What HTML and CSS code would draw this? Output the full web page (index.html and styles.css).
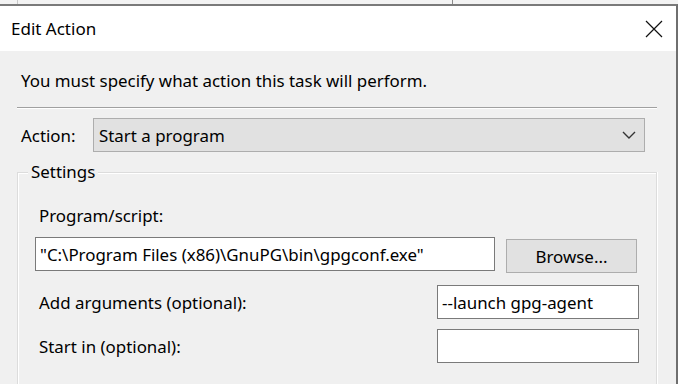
FILE: index.html
```html
<!DOCTYPE html>
<html>
<head>
<meta charset="utf-8">
<link rel="stylesheet" href="styles.css">
</head>
<body>
<div class="backdrop">
  <div class="bd-line bd-line-a"></div>
  <div class="bd-line bd-line-b"></div>
</div>
<div class="dialog">
  <div class="titlebar">
    <span class="title">Edit Action</span>
    <svg class="close" width="18" height="18" viewBox="0 0 18 18"><path d="M1 1 L17 17 M17 1 L1 17" stroke="#111" stroke-width="1.2" fill="none"/></svg>
  </div>
  <div class="content">
    <p class="intro">You must specify what action this task will perform.</p>
    <div class="separator"></div>
    <div class="action-row">
      <span class="action-label">Action:</span>
      <div class="combo">
        <span>Start a program</span>
        <svg class="chev" width="14" height="8" viewBox="0 0 14 8"><path d="M1 1 L7 7 L13 1" stroke="#333" stroke-width="1.4" fill="none"/></svg>
      </div>
    </div>
    <div class="group">
      <span class="legend">Settings</span>
      <div class="field-label">Program/script:</div>
      <div class="program-row">
        <div class="input wide">"C:\Program Files (x86)\GnuPG\bin\gpgconf.exe"</div>
        <div class="button">Browse...</div>
      </div>
      <div class="arg-row">
        <span class="field-label-inline">Add arguments (optional):</span>
        <div class="input small">--launch gpg-agent</div>
      </div>
      <div class="arg-row">
        <span class="field-label-inline">Start in (optional):</span>
        <div class="input small"></div>
      </div>
    </div>
  </div>
</div>
</body>
</html>
```
FILE: styles.css
```css
html, body {
  margin: 0;
  padding: 0;
  width: 678px;
  height: 384px;
  overflow: hidden;
  background: #f0f0f0;
  font-family: "Noto Sans", "Open Sans", sans-serif;
  font-size: 16.9px;
  color: #000;
}
.backdrop {
  height: 4px;
  position: relative;
  background: #f3f3f3;
}
.bd-line {
  position: absolute;
  top: 0;
  width: 1px;
  height: 4px;
}
.bd-line-a { left: 17px; background: #c8c8c8; }
.bd-line-b { left: 452px; background: #8a8a8a; }
.dialog {
  width: 676px;
  border-top: 2px solid #7a7a7a;
  border-right: 2px solid #6f6f6f;
  height: 378px;
  background: #f0f0f0;
  overflow: hidden;
}
.titlebar {
  height: 45px;
  background: #fff;
  display: flex;
  align-items: center;
  justify-content: space-between;
  padding: 0 13px 0 11px;
}
.title {
  font-size: 17px;
}
.close { display: block; }
.content {
  padding: 0 19px 0 17px;
}
.intro {
  margin: 0;
  padding: 20px 0 0 4px;
  height: 36px;
  line-height: 20px;
}
.separator {
  height: 1px;
  background: #a0a0a0;
  border-bottom: 1px solid #fff;
  margin: 0 0 9px 0;
}
.action-row {
  display: flex;
  align-items: center;
  padding-left: 4px;
}
.action-label {
  flex: 0 0 72px;
}
.combo {
  flex: 0 0 552px;
  border: 1px solid #adadad;
  background: #e1e1e1;
  display: flex;
  align-items: center;
  justify-content: space-between;
  padding: 0 8px 0 5px;
  box-sizing: border-box;
  height: 34px;
}
.chev { display: block; }
.group {
  margin-top: 20px;
  border: 1px solid #dcdcdc;
  border-bottom: none;
  box-shadow: inset 1px 1px 0 #fff, 1px 0 0 #fff;
  height: 240px;
  position: relative;
  padding: 0 0 0 17px;
}
.legend {
  position: absolute;
  top: -11px;
  left: 10px;
  background: #f0f0f0;
  padding: 0 3px;
  line-height: 20px;
}
.field-label {
  margin-top: 32px;
  padding-left: 4px;
  line-height: 22px;
}
.program-row {
  display: flex;
  align-items: flex-start;
  gap: 11px;
  margin-top: 10px;
}
.input {
  box-sizing: border-box;
  height: 34px;
  background: #fff;
  border: 1px solid #7a7a7a;
  display: flex;
  align-items: center;
  padding-left: 4px;
  white-space: nowrap;
  overflow: hidden;
}
.wide { width: 460px; }
.small { width: 202px; }
.button {
  box-sizing: border-box;
  width: 131px;
  height: 34px;
  margin-top: 2px;
  background: #e1e1e1;
  border: 1px solid #adadad;
  display: flex;
  align-items: center;
  justify-content: center;
}
.arg-row {
  display: flex;
  align-items: center;
  justify-content: space-between;
  width: 604px;
  padding-left: 4px;
  box-sizing: border-box;
  margin-top: 12px;
}
.arg-row + .arg-row { margin-top: 10px; }
```
